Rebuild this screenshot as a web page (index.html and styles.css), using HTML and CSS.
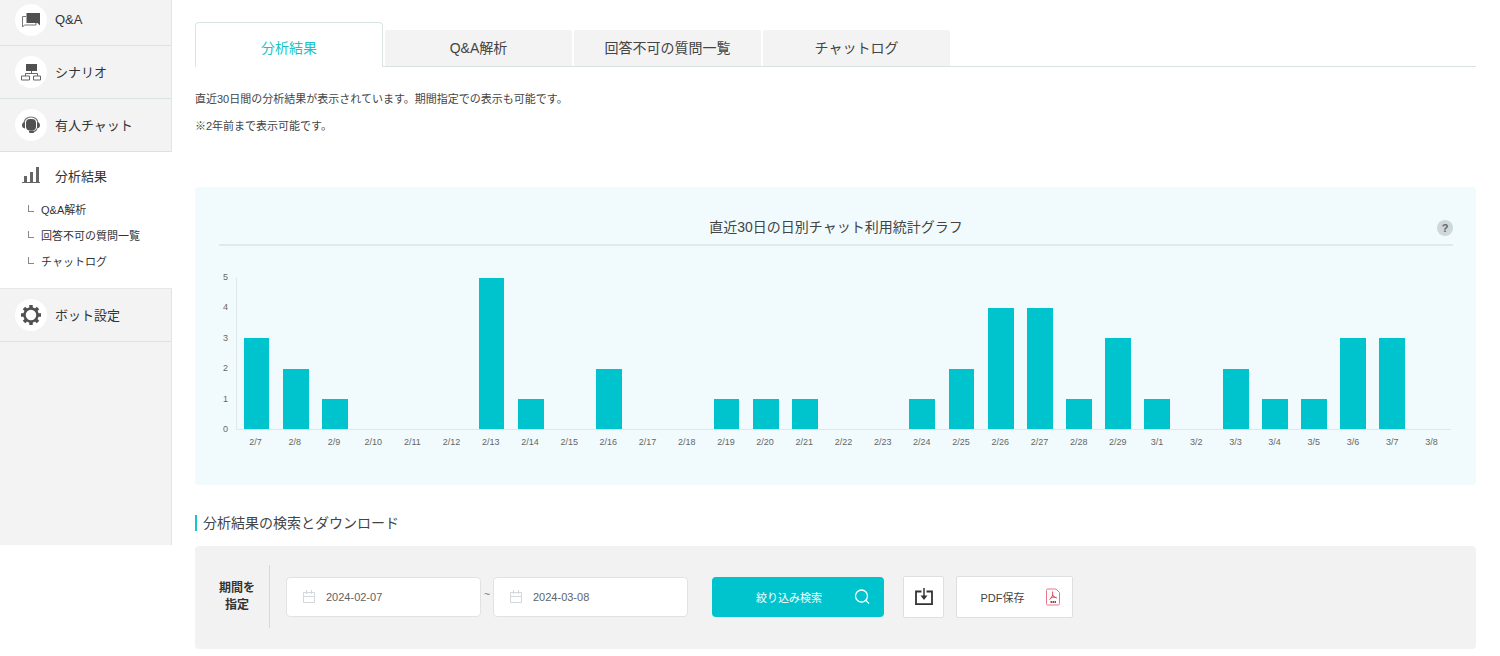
FILE: index.html
```
<!DOCTYPE html>
<html lang="ja">
<head>
<meta charset="utf-8">
<title>分析結果</title>
<link rel="stylesheet" href="styles.css">
</head>
<body>
<div class="layout">
  <nav class="sidebar">
    <a class="side-item side-first" href="#"><span class="side-icon"><svg width="20" height="16" viewBox="0 0 20 16"><path fill="#505050" d="M5.500 1H19v12.500L16.500 11h-11z"/><path fill="none" stroke="#777" d="M5 4.500H1.500v10.500l2-2H15V11"/></svg></span>Q&amp;A</a>
    <a class="side-item" href="#"><span class="side-icon"><svg width="22" height="18" viewBox="0 0 22 18"><path fill="#505050" d="M6 1h11v7H6z"/><path fill="none" stroke="#666" d="M11.500 8v2.500M5.500 13v-2.500h12V13M1.500 13h8v4h-8zM13.500 13h7v4h-7z"/></svg></span>シナリオ</a>
    <a class="side-item" href="#"><span class="side-icon"><svg width="20" height="18" viewBox="0 0 20 18"><path fill="none" stroke="#777" stroke-width="1.200" d="M3 7a7 6 0 0 1 14 0"/><rect x="5" y="3" width="10" height="11.500" rx="4" fill="#505050"/><path fill="#555" d="M4 6v6.500Q1 12 1 9.250T4 6zM16 6v6.500q3-.5 3-3.250T16 6z"/><path fill="none" stroke="#777" stroke-width="1.200" d="M16 12.500q-1 3-5 3.500"/><rect x="8" y="14.500" width="5" height="2.500" rx="1" fill="#555"/></svg></span>有人チャット</a>
    <div class="side-open">
      <a class="side-item side-current" href="#"><span class="side-icon"><svg width="20" height="18" viewBox="0 0 20 18"><path fill="#666" d="M3 10h3v6H3zM9 6h3v10H9zM15 1h3v15h-3zM1 16h18v1H1z"/></svg></span>分析結果</a>
      <ul class="side-sub">
        <li><a href="#">Q&amp;A解析</a></li>
        <li><a href="#">回答不可の質問一覧</a></li>
        <li><a href="#">チャットログ</a></li>
      </ul>
    </div>
    <a class="side-item" href="#"><span class="side-icon"><svg width="22" height="22" viewBox="0 0 22 22"><circle cx="11" cy="11" r="6.500" fill="none" stroke="#505050" stroke-width="2.500"/><g stroke="#505050" stroke-width="3.500"><path d="M11 1v3M11 18v3M1 11h3M18 11h3M4 4l2 2M16 16l2 2M18 4l-2 2M6 16l-2 2"/></g></svg></span>ボット設定</a>
  </nav>

  <main class="main">
    <nav class="tabs">
      <a class="tab tab-active" href="#">分析結果</a>
      <a class="tab" href="#">Q&amp;A解析</a>
      <a class="tab" href="#">回答不可の質問一覧</a>
      <a class="tab" href="#">チャットログ</a>
    </nav>
    <div class="intro">
      <p>直近30日間の分析結果が表示されています。期間指定での表示も可能です。</p>
      <p>※2年前まで表示可能です。</p>
    </div>

    <section class="chart-panel">
      <header class="chart-head">
        <h2>直近30日の日別チャット利用統計グラフ</h2>
        <button class="help" type="button">?</button>
      </header>
      <div class="chart">
        <ol class="y-axis"><li>5</li><li>4</li><li>3</li><li>2</li><li>1</li><li>0</li></ol>
        <div class="plot">
          <span class="bar" style="height:60%"></span><span class="bar" style="height:40%"></span><span class="bar" style="height:20%"></span><span class="bar" style="height:0%"></span><span class="bar" style="height:0%"></span><span class="bar" style="height:0%"></span>
          <span class="bar" style="height:100%"></span><span class="bar" style="height:20%"></span><span class="bar" style="height:0%"></span><span class="bar" style="height:40%"></span><span class="bar" style="height:0%"></span><span class="bar" style="height:0%"></span>
          <span class="bar" style="height:20%"></span><span class="bar" style="height:20%"></span><span class="bar" style="height:20%"></span><span class="bar" style="height:0%"></span><span class="bar" style="height:0%"></span><span class="bar" style="height:20%"></span>
          <span class="bar" style="height:40%"></span><span class="bar" style="height:80%"></span><span class="bar" style="height:80%"></span><span class="bar" style="height:20%"></span><span class="bar" style="height:60%"></span><span class="bar" style="height:20%"></span>
          <span class="bar" style="height:0%"></span><span class="bar" style="height:40%"></span><span class="bar" style="height:20%"></span><span class="bar" style="height:20%"></span><span class="bar" style="height:60%"></span><span class="bar" style="height:60%"></span><span class="bar" style="height:0%"></span>
        </div>
        <ol class="x-axis">
          <li>2/7</li><li>2/8</li><li>2/9</li><li>2/10</li><li>2/11</li><li>2/12</li><li>2/13</li><li>2/14</li><li>2/15</li><li>2/16</li><li>2/17</li><li>2/18</li><li>2/19</li><li>2/20</li><li>2/21</li><li>2/22</li><li>2/23</li><li>2/24</li><li>2/25</li><li>2/26</li><li>2/27</li><li>2/28</li><li>2/29</li><li>3/1</li><li>3/2</li><li>3/3</li><li>3/4</li><li>3/5</li><li>3/6</li><li>3/7</li><li>3/8</li>
        </ol>
      </div>
    </section>

    <h2 class="section-title">分析結果の検索とダウンロード</h2>
    <form class="search">
      <label class="search-label" for="from">期間を<br>指定</label>
      <div class="range">
        <span class="date"><svg width="14" height="14" viewBox="0 0 14 14" fill="none" stroke="#d3d8dd"><path d="M1.500 2.500h11v10h-11zM1.500 6.500h11M4.500 0v4M9.500 0v4"/></svg><input id="from" type="text" value="2024-02-07"></span>
        <span class="tilde">~</span>
        <span class="date"><svg width="14" height="14" viewBox="0 0 14 14" fill="none" stroke="#d3d8dd"><path d="M1.500 2.500h11v10h-11zM1.500 6.500h11M4.500 0v4M9.500 0v4"/></svg><input type="text" aria-label="終了日" value="2024-03-08"></span>
      </div>
      <button class="submit" type="submit">絞り込み検索<svg width="16" height="16" viewBox="0 0 16 16" fill="none" stroke="#fff" stroke-width="1.300"><circle cx="7.500" cy="7" r="6"/><path d="M12 11.500l3 3"/></svg></button>
      <div class="exports">
        <button class="export" type="button" aria-label="ダウンロード"><svg width="20" height="20" viewBox="0 0 20 20"><path fill="none" stroke="#333" stroke-width="1.800" d="M7.500 4.500H2v12.600h16V4.500h-5.500"/><path stroke="#333" stroke-width="1.500" d="M10 1v10"/><path fill="#333" d="M6.500 8.500h7L10 13z"/></svg></button>
        <button class="export export-pdf" type="button">PDF保存<svg width="16" height="18" viewBox="0 0 16 18" fill="none" stroke="#ea7587"><path d="M2.500 1h8.500L14.500 4.500v11q0 1.500-1.500 1.500H2.500Q1.500 17 1.500 15.500v-13Q1.500 1 2.500 1z"/><path stroke="#dc4058" d="M7.700 3.500v3.500q-.7 2.500-3.200 4.500M7.700 7q1 2.500 4.300 3M5.500 10q2-1 4.500-1"/><path stroke="#8c4b55" stroke-width="1.800" stroke-dasharray="1.500 .500" d="M5.500 14h5.500"/></svg></button>
      </div>
    </form>
  </main>
</div>
</body>
</html>
```
FILE: styles.css
```
* { box-sizing: border-box; }
body {
  margin: 0;
  background: #fff;
  color: #444;
  font-family: "Liberation Sans", "Noto Sans CJK JP", sans-serif;
  font-size: 11px;
}
a { color: inherit; text-decoration: none; }
h2, p, ul, ol { margin: 0; padding: 0; font-weight: normal; list-style: none; }
button, input { font: inherit; color: inherit; }

.layout { display: flex; align-items: flex-start; }

.sidebar {
  flex: 0 0 172px;
  min-height: 545px;
  background: #f3f3f3;
  border-right: 1px solid #e0e4e5;
}
.side-item {
  display: flex;
  align-items: center;
  gap: 8px;
  height: 53px;
  padding: 0 0 1px 15px;
  border-bottom: 1px solid #dbe2e3;
  color: #333;
  font-size: 13px;
}
.side-first { height: 46px; padding-bottom: 6px; }
.side-icon {
  display: flex;
  align-items: center;
  justify-content: center;
  width: 32px;
  height: 32px;
  border-radius: 50%;
  background: #fff;
}
.side-open {
  margin-right: -1px;
  padding-bottom: 13px;
  background: #fff;
  border-bottom: 1px solid #e6e9ea;
}
.side-current { height: 45px; padding-top: 2px; border: 0; }
.side-sub li { display: flex; height: 26px; line-height: 26px; padding-left: 27px; color: #333; }
.side-sub li::before {
  content: "";
  width: 5px;
  height: 6px;
  margin: 8px 7px 0 1px;
  border: solid #888;
  border-width: 0 0 1px 1px;
}

.main { flex: 1; min-width: 0; padding: 22px 24px 7px 23px; }

.tabs { display: flex; align-items: flex-end; gap: 2px; border-bottom: 1px solid #d9e2e2; }
.tab {
  width: 187px;
  height: 36px;
  line-height: 36px;
  background: #f3f3f3;
  border-radius: 2px 2px 0 0;
  text-align: center;
  font-size: 14px;
}
.tab-active {
  width: 188px;
  height: 45px;
  margin-bottom: -1px;
  padding-top: 7px;
  background: #fff;
  border: 1px solid #d9e5e5;
  border-bottom: 0;
  border-radius: 4px 4px 0 0;
  color: #1cc3c6;
}
.intro { padding-top: 19px; line-height: 27px; }

.chart-panel {
  margin-top: 47px;
  padding: 25px 23px 37px 24px;
  background: #f1fbfd;
  border-radius: 4px;
}
.chart-head {
  display: grid;
  grid-template-columns: 16px 1fr 16px;
  align-items: center;
  height: 34px;
  padding-bottom: 4px;
  border-bottom: 2px solid #e1e9eb;
}
.chart-head h2 { grid-column: 2; text-align: center; font-size: 14px; }
.help {
  width: 16px;
  height: 16px;
  margin-top: 4px;
  padding: 0;
  border: 0;
  border-radius: 50%;
  background: #cdd7dc;
  color: #5b6770;
  font-size: 11px;
  font-weight: bold;
  line-height: 16px;
}
.chart {
  display: grid;
  grid-template-columns: 17px 1fr;
  padding: 32px 2px 0 0;
  color: #666;
  font-size: 9px;
}
.y-axis {
  display: flex;
  flex-direction: column;
  justify-content: space-between;
  margin: -7px 0 -5px;
  padding-right: 8px;
  text-align: right;
  line-height: 12px;
}
.plot {
  display: grid;
  grid-template-columns: repeat(31, 1fr);
  align-items: end;
  justify-items: center;
  height: 152px;
  border: solid #e0e7ea;
  border-width: 0 0 1px 1px;
}
.bar { width: 66%; background: #00c4cd; }
.x-axis {
  grid-column: 2;
  display: grid;
  grid-template-columns: repeat(31, 1fr);
  padding-top: 6px;
  line-height: 12px;
  text-align: center;
}

.section-title {
  margin: 30px 0 15px;
  padding-left: 6px;
  border-left: 2px solid #1cc3c6;
  font-size: 14px;
  line-height: 16px;
}

.search {
  display: flex;
  align-items: center;
  min-height: 103px;
  padding: 18px 24px 20px;
  background: #f2f2f2;
  border-radius: 4px;
}
.search-label {
  display: flex;
  align-items: center;
  width: 51px;
  height: 63px;
  border-right: 1px solid #d8d8d8;
  color: #333;
  font-size: 12px;
  font-weight: bold;
  line-height: 17px;
  text-align: center;
}
.range { display: flex; align-items: center; margin-left: 16px; }
.date {
  display: flex;
  align-items: center;
  gap: 10px;
  width: 195px;
  height: 40px;
  padding: 0 15px;
  background: #fff;
  border: 1px solid #dfe3e5;
  border-radius: 4px;
}
.date svg { flex: none; }
.date input { flex: 1; min-width: 0; padding: 0; border: 0; background: none; color: #606266; }
.tilde { width: 12px; padding-bottom: 6px; text-align: center; color: #777; }
.submit {
  display: flex;
  align-items: center;
  justify-content: flex-end;
  gap: 32px;
  width: 172px;
  height: 40px;
  margin-left: 24px;
  padding: 0 14px;
  border: 0;
  border-radius: 4px;
  background: #00c4cd;
  color: #fff;
}
.exports { display: flex; gap: 12px; margin-left: 19px; }
.export {
  display: flex;
  align-items: center;
  justify-content: center;
  gap: 20px;
  width: 41px;
  height: 42px;
  padding: 0;
  border: 1px solid #dde0e2;
  border-radius: 2px;
  background: #fff;
}
.export-pdf { width: 117px; padding-left: 12px; }
```
